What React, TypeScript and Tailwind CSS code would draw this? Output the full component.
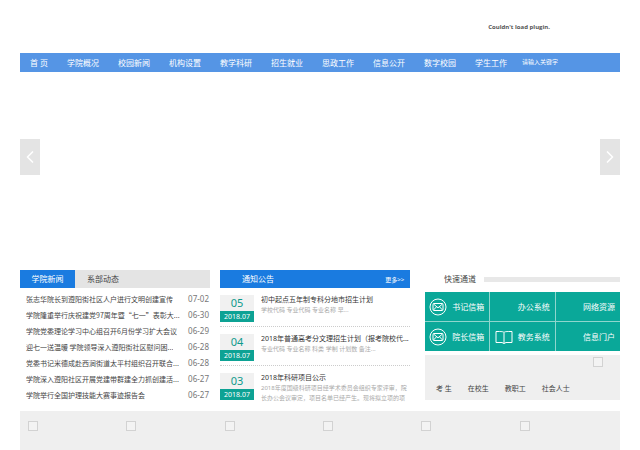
import { ChevronLeft, ChevronRight } from 'lucide-react'

const navItems = [
  '首 页',
  '学院概况',
  '校园新闻',
  '机构设置',
  '教学科研',
  '招生就业',
  '思政工作',
  '信息公开',
  '数字校园',
  '学生工作',
]

const news = [
  { title: '张志华院长到遵阳街社区人户进行文明创建宣传', date: '07-02' },
  { title: '学院隆重举行庆祝建党97周年暨“七一”表彰大...', date: '06-30' },
  { title: '学院党委理论学习中心组召开6月份学习扩大会议', date: '06-29' },
  { title: '迎七一送温暖 学院领导深入遵阳街社区慰问困...', date: '06-28' },
  { title: '党委书记米德成赴西涧街道太平村组织召开联合...', date: '06-28' },
  { title: '学院深入遵阳社区开展党建带群建全力抓创建活...', date: '06-27' },
  { title: '学院举行全国护理技能大赛事迹报告会', date: '06-27' },
]

const notices = [
  {
    day: '05',
    month: '2018.07',
    title: '初中起点五年制专科分地市招生计划',
    text: '学校代码 专业代码 专业名称 早...',
  },
  {
    day: '04',
    month: '2018.07',
    title: '2018年普通高考分文理招生计划（报考院校代...',
    text: '专业代码 专业名称 科类 学制 计划数 备注...',
  },
  {
    day: '03',
    month: '2018.07',
    title: '2018年科研项目公示',
    text: '2018年度国级科研项目经学术委员会组织专家评审，院长办公会议审定，项目名单已经产生。现将拟立项的项',
  },
]

const shortcuts = [
  { name: '书记信箱', icon: 'mail' },
  { name: '办公系统' },
  { name: '网络资源' },
  { name: '院长信箱', icon: 'mail' },
  { name: '教务系统', icon: 'book' },
  { name: '信息门户' },
]

const groups = ['考 生', '在校生', '教职工', '社会人士']

function MailIcon() {
  return (
    <svg viewBox="0 0 18 18" className="size-[18px]" fill="none" stroke="white" strokeWidth="1">
      <circle cx="9" cy="9" r="8" />
      <rect x="4" y="5.5" width="10" height="7" rx="1" />
      <path d="M4.5 6l4.5 3.8L13.5 6M4.5 12l3-3.2M13.5 12l-3-3.2" />
    </svg>
  )
}

function BookIcon() {
  return (
    <svg viewBox="0 0 18 18" className="size-[18px]" fill="none" stroke="white" strokeWidth="1">
      <path d="M9 4.5C8 3.500 7 3.500 1 3.500v11h6l2 1 2-1h6v-11c-6 0-7 0-8 1zM9 4.500v11" />
    </svg>
  )
}

function MissingImage() {
  return <span className="block size-[10px] border border-[#d2d2d2] bg-[#f3f3f3]" />
}

export default function App() {
  return (
    <div className="bg-white px-5 font-['Noto_Sans','Noto_Sans_CJK_SC',sans-serif] text-[#444]">
      <header className="flex h-[54px] items-center justify-end pr-[70px] -mb-px">
        <p className="font-['Open_Sans',sans-serif] text-[6px] font-bold text-[#555]">
          Couldn't load plugin.
        </p>
      </header>

      <nav className="flex h-[19px] items-center gap-[19px] bg-[#5595e5] pl-[10px] text-[8px] text-white">
        {navItems.map((item) => (
          <a key={item} href="#" className="whitespace-nowrap">
            {item}
          </a>
        ))}
        <input
          type="text"
          aria-label="搜索"
          placeholder="请输入关键字"
          className="-ml-1 min-w-0 flex-1 bg-transparent text-[6px] placeholder:text-white"
        />
      </nav>

      {/* Banner slider */}
      <section className="flex h-[198px] items-center justify-between pb-7">
        <button aria-label="上一张" className="flex h-[36px] w-5 items-center justify-center bg-[#e4e4e4]">
          <ChevronLeft className="size-5 text-white" strokeWidth={2} />
        </button>
        <button aria-label="下一张" className="flex h-[36px] w-5 items-center justify-center bg-[#e4e4e4]">
          <ChevronRight className="size-5 text-white" strokeWidth={2} />
        </button>
      </section>

      <main className="grid grid-cols-[19fr_19fr_20fr] gap-[10px]">
        {/* News */}
        <section className="min-w-0">
          <div className="flex h-[18px] bg-[#e4e4e4] text-[8px]">
            <button className="w-[55px] bg-[#1a7be0] text-white">学院新闻</button>
            <button className="px-3">系部动态</button>
          </div>
          <ul className="pt-[3px]">
            {news.map((item) => (
              <li key={item.title} className="flex h-4 items-center justify-between pl-[6px] pr-px">
                <a href="#" className="truncate font-['Noto_Sans_CJK_SC',sans-serif] text-[7px]">
                  {item.title}
                </a>
                <span className="text-[8px] text-[#777]">{item.date}</span>
              </li>
            ))}
          </ul>
        </section>

        {/* Notices */}
        <section className="min-w-0">
          <div className="flex h-[18px] items-center justify-between bg-[#1a7be0] pl-[22px] pr-[6px] text-white">
            <h2 className="text-[8px]">通知公告</h2>
            <a href="#" className="font-['Noto_Sans_CJK_SC',sans-serif] text-[6px]">
              更多&gt;&gt;
            </a>
          </div>
          <ul>
            {notices.map((item) => (
              <li
                key={item.day}
                className="flex h-[39px] gap-[7px] border-b border-dotted border-[#ccc] pt-[7px] last:border-b-0"
              >
                <div className="w-[34px] shrink-0 text-center">
                  <div className="h-4 bg-[#f1f1f1] text-[11px] leading-4 text-[#0e9a8c]">{item.day}</div>
                  <div className="h-[11px] bg-[#0da294] text-[7px] leading-[11px] text-white">{item.month}</div>
                </div>
                <div className="min-w-0 flex-1">
                  <h3 className="overflow-hidden whitespace-nowrap text-[7px] leading-[10px] text-[#333]">
                    {item.title}
                  </h3>
                  <p className="text-[6px] leading-[10px] text-[#aaa]">{item.text}</p>
                </div>
              </li>
            ))}
          </ul>
        </section>

        {/* Quick links */}
        <section className="min-w-0 pl-[5px]">
          <div className="flex h-[18px] items-center gap-2 pl-[19px]">
            <h2 className="text-[8px]">快速通道</h2>
            <span className="h-[5px] flex-1 bg-[#e8e8e8]" />
          </div>
          <div className="mt-1 grid grid-cols-3 gap-px bg-[#8fd6cd] text-[8px] text-white">
            {shortcuts.map((item) => (
              <a
                key={item.name}
                href="#"
                className="flex h-[29px] items-center justify-end gap-[5px] bg-[#0aa899] pr-[5px]"
              >
                {item.icon === 'mail' && <MailIcon />}
                {item.icon === 'book' && <BookIcon />}
                <span>{item.name}</span>
              </a>
            ))}
          </div>
          <div className="mt-1 flex h-[45px] flex-col justify-between bg-[#efefef] pb-[6px] pl-[11px] pr-[17px] pt-[2px]">
            <div className="flex justify-end">
              <MissingImage />
            </div>
            <div className="flex gap-4 text-[7px] leading-[10px]">
              {groups.map((name) => (
                <a key={name} href="#">
                  {name}
                </a>
              ))}
            </div>
          </div>
        </section>
      </main>

      <footer className="mt-[6px] grid min-h-[39px] grid-cols-6 bg-[#efefef] pl-2 pr-[2px] pt-[10px]">
        {[1, 2, 3, 4, 5, 6].map((n) => (
          <MissingImage key={n} />
        ))}
      </footer>
    </div>
  )
}
